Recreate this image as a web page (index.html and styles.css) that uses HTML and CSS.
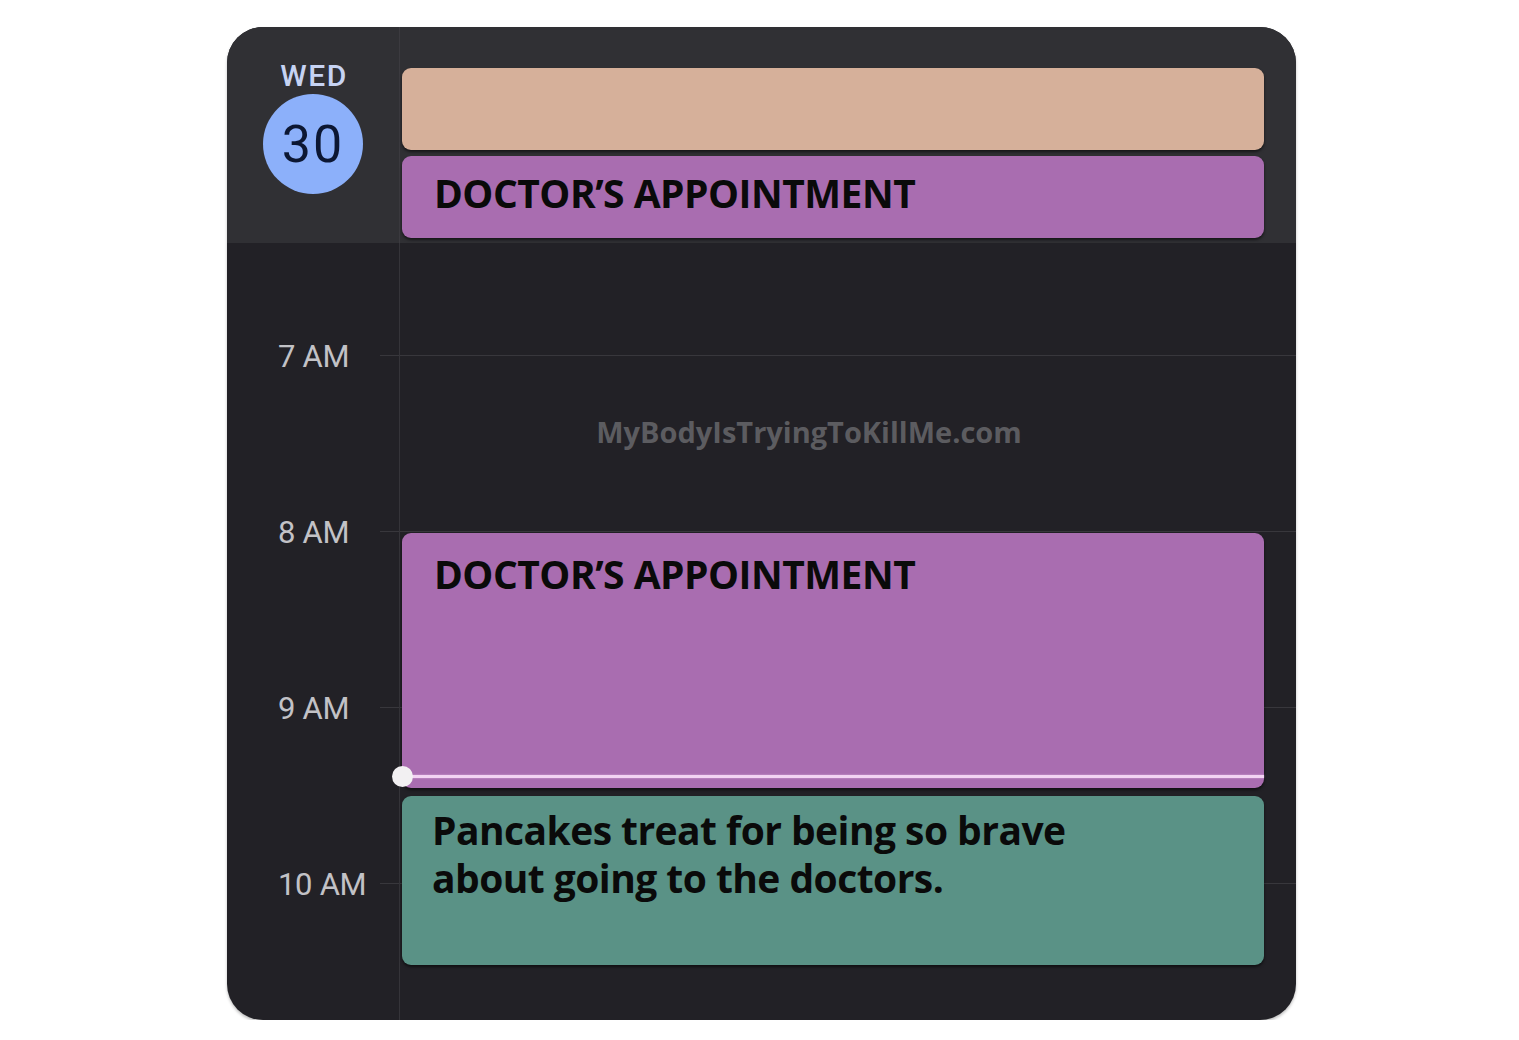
FILE: index.html
```html
<!DOCTYPE html>
<html lang="en">
<head>
<meta charset="utf-8">
<title>Calendar</title>
<link rel="stylesheet" href="styles.css">
</head>
<body>
<div class="card">
  <div class="header">
    <div class="day">
      <div class="dow">WED</div>
      <div class="date">30</div>
    </div>
    <div class="allday">
      <div class="event peach"></div>
      <div class="event purple short"><span class="title">DOCTOR’S APPOINTMENT</span></div>
    </div>
  </div>
  <div class="body">
    <div class="divider"></div>
    <div class="hours">
      <div class="hour"><span class="hour-label">7 AM</span><span class="hour-line"></span></div>
      <div class="hour"><span class="hour-label">8 AM</span><span class="hour-line"></span></div>
      <div class="hour"><span class="hour-label">9 AM</span><span class="hour-line"></span></div>
      <div class="hour"><span class="hour-label">10 AM</span><span class="hour-line"></span></div>
    </div>
    <div class="watermark">MyBodyIsTryingToKillMe.com</div>
    <div class="event purple long"><span class="title">DOCTOR’S APPOINTMENT</span></div>
    <div class="event green"><span class="title note">Pancakes treat for being so brave<br>about going to the doctors.</span></div>
    <div class="now"><span class="now-dot"></span></div>
  </div>
</div>
</body>
</html>
```

FILE: styles.css
```css
html, body {
  margin: 0;
  padding: 0;
  background: #ffffff;
}

.card {
  width: 1069px;
  height: 993px;
  margin: 27px 0 0 227px;
  border-radius: 36px;
  overflow: hidden;
  background: #222126;
  display: flex;
  flex-direction: column;
  box-shadow: 0 2px 3px rgba(0, 0, 0, 0.25);
}

.header {
  height: 216px;
  flex: none;
  background: #303034;
  display: flex;
}

.day {
  width: 172px;
  border-right: 1px solid #3b3a3f;
  display: flex;
  flex-direction: column;
  align-items: center;
  padding-top: 32px;
  box-sizing: content-box;
}

.dow {
  font-family: Roboto, "Noto Sans", sans-serif;
  font-weight: 500;
  font-size: 30px;
  line-height: 33px;
  letter-spacing: 1.5px;
  color: #c6d3f3;
  margin-left: 2px;
}

.date {
  width: 100px;
  height: 100px;
  margin-top: 2px;
  border-radius: 50%;
  background: #8cb0fa;
  color: #0c1733;
  font-family: Roboto, "Noto Sans", sans-serif;
  font-size: 52px;
  letter-spacing: 2px;
  display: flex;
  align-items: center;
  justify-content: center;
}

.allday {
  flex: 1;
  padding: 41px 32px 0 2px;
  display: flex;
  flex-direction: column;
  gap: 6px;
}

.event {
  border-radius: 9px;
  box-shadow: 0 2px 3px rgba(0, 0, 0, 0.55);
  box-sizing: border-box;
}

.peach {
  height: 82px;
  background: #d6b09a;
}

.purple {
  background: #a96db0;
}

.short {
  height: 82px;
  padding: 13px 0 0 32px;
}

.title {
  font-family: "Open Sans", "Noto Sans", sans-serif;
  font-weight: 700;
  font-size: 39px;
  line-height: 48px;
  color: #0a0a0a;
  letter-spacing: -0.5px;
}

.note {
  letter-spacing: -0.55px;
}

.body {
  flex: 1;
  position: relative;
}

.divider {
  position: absolute;
  left: 172px;
  top: 0;
  bottom: 0;
  width: 1px;
  background: #353439;
}

.hours {
  padding-top: 112px;
  display: flex;
  flex-direction: column;
}

.hour {
  height: 176px;
  display: flex;
  align-items: flex-start;
}

.hour-label {
  width: 102px;
  padding-left: 51px;
  font-family: Roboto, "Noto Sans", sans-serif;
  font-size: 31px;
  line-height: 32px;
  letter-spacing: -0.3px;
  color: #c2c2c6;
  transform: translateY(-14px);
}

.hour-line {
  flex: 1;
  height: 1px;
  background: #38373c;
}

.watermark {
  position: absolute;
  left: 0;
  right: 0;
  top: 171px;
  padding-left: 95px;
  text-align: center;
  font-family: "Open Sans", "Noto Sans", sans-serif;
  font-weight: 700;
  font-size: 29px;
  line-height: 36px;
  color: #5c5c60;
}

.long {
  position: absolute;
  left: 175px;
  right: 32px;
  top: 290px;
  height: 255px;
  padding: 17px 0 0 32px;
}

.green {
  position: absolute;
  left: 175px;
  right: 32px;
  top: 553px;
  height: 169px;
  background: #5a9286;
  padding: 10px 0 0 30px;
}

.now {
  position: absolute;
  left: 175px;
  right: 32px;
  top: 532px;
  height: 3px;
  background: #f3d3f3;
  box-shadow: 0 0 2px rgba(255, 220, 255, 0.6);
}

.now-dot {
  position: absolute;
  left: -10px;
  top: -9px;
  width: 21px;
  height: 21px;
  border-radius: 50%;
  background: #f2f0f2;
}
```
